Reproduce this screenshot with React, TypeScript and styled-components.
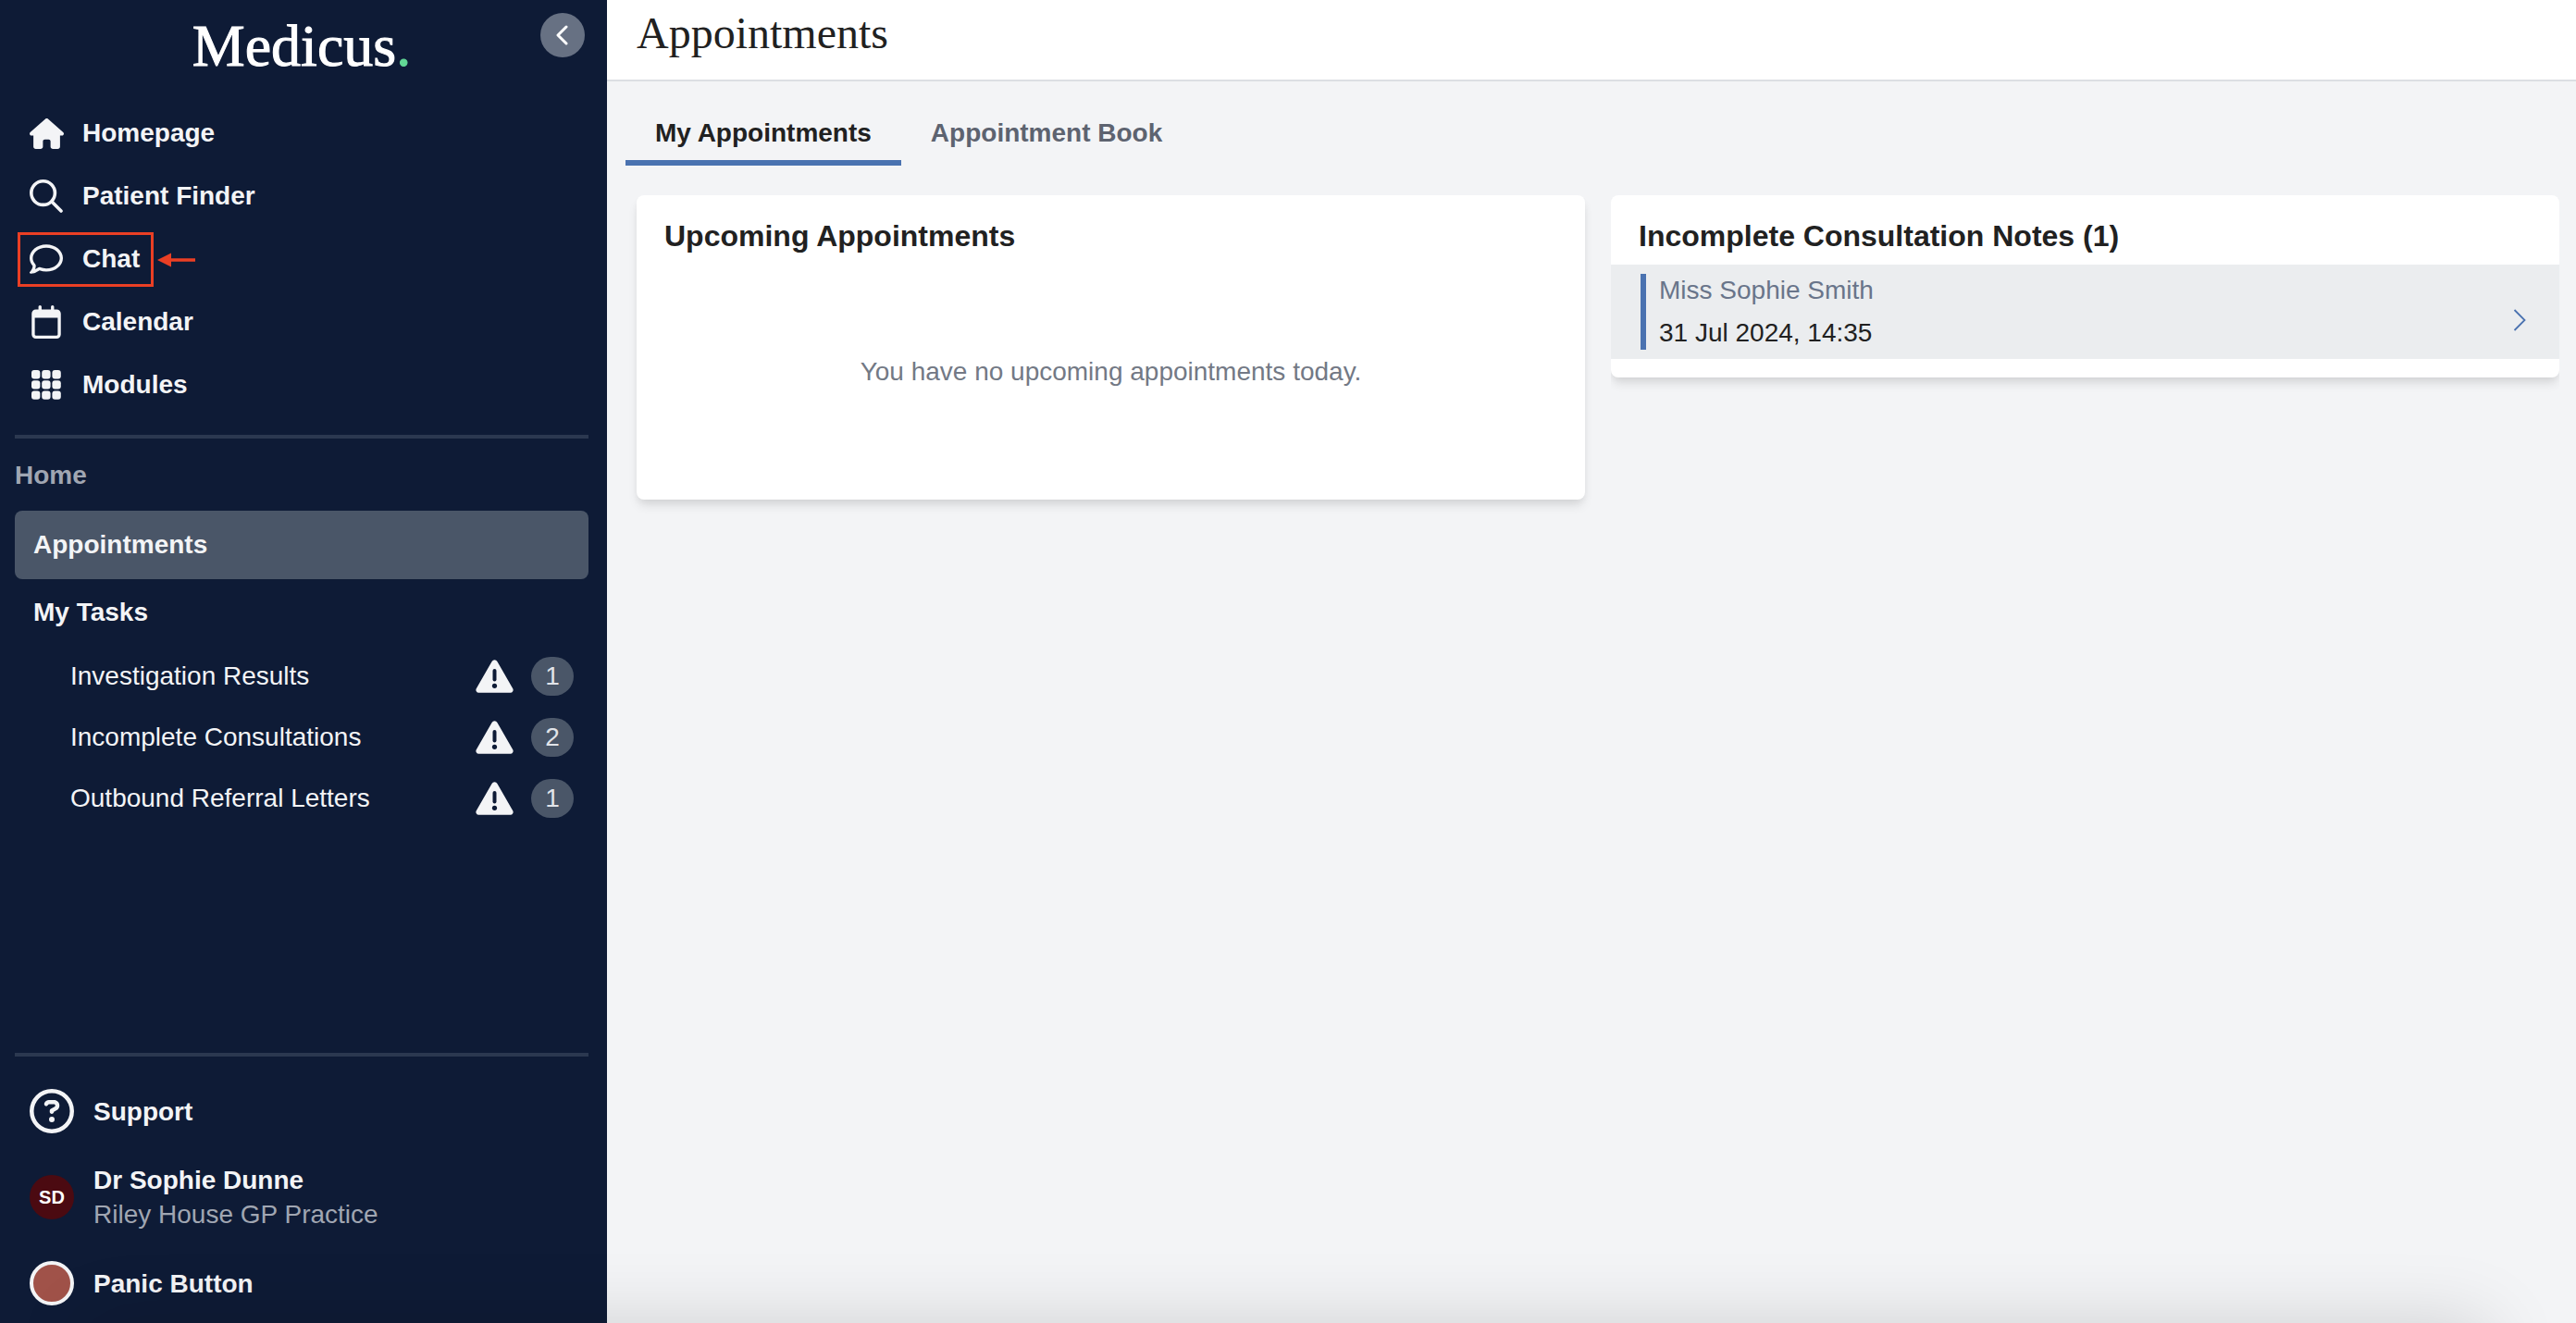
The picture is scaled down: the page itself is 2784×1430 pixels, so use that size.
import React from "react";
import styled, { createGlobalStyle } from "styled-components";
import {
  FaHouse,
  FaRegComment,
  FaRegCalendar,
  FaRegCircleQuestion,
} from "react-icons/fa6";

const colors = {
  navy: "#0e1b36",
  navyLine: "#2b3850",
  slate: "#4a5668",
  light: "#f3f4f6",
  muted: "#a0a6b2",
  ink: "#212121",
  blue: "#4a72b0",
  red: "#ea3f24",
};

const GlobalStyle = createGlobalStyle`
  *, *::before, *::after { box-sizing: border-box; }
  body {
    margin: 0;
    background: ${colors.light};
    color: ${colors.ink};
    font-family: "Liberation Sans", Arial, sans-serif;
    font-size: 28px;
    line-height: 36px;
  }
  a { color: inherit; text-decoration: none; }
  button { font: inherit; color: inherit; border: 0; background: none; padding: 0; cursor: pointer; }
  ul { list-style: none; margin: 0; padding: 0; }
  h1, h2, p { margin: 0; }
  svg { display: block; flex: none; }
`;

const Page = styled.div`
  display: flex;
  min-height: 100vh;
`;

/* Sidebar */

const Sidebar = styled.aside`
  display: flex;
  flex-direction: column;
  flex: none;
  width: 656px;
  background: ${colors.navy};
  color: ${colors.light};
`;

const Brand = styled.div`
  display: grid;
  grid-template-columns: 1fr auto 1fr;
  align-items: start;
  height: 110px;
  padding: 14px 24px 0 20px;
`;

const Logo = styled.a`
  grid-column: 2;
  padding-top: 4px;
  font-family: "Liberation Serif", "Times New Roman", serif;
  font-size: 64px;
  line-height: 64px;
  color: #ffffff;
  -webkit-text-stroke: 1px currentColor;
`;

const LogoDot = styled.span`
  color: #62d896;
`;

const CollapseButton = styled.button`
  display: flex;
  align-items: center;
  justify-content: center;
  justify-self: end;
  width: 48px;
  height: 48px;
  border-radius: 50%;
  background: #677183;
  color: #ffffff;
`;

const NavItem = styled.li`
  position: relative;
`;

const NavLink = styled.a`
  display: flex;
  align-items: center;
  gap: 19px;
  height: 68px;
  padding-left: 30px;
  font-weight: 700;
`;

const IconSlot = styled.span`
  display: flex;
  justify-content: center;
  width: 40px;
`;

const Highlight = styled.span`
  position: absolute;
  left: 19px;
  top: 5px;
  width: 147px;
  height: 59px;
  border: 3px solid ${colors.red};
  pointer-events: none;
`;

const Arrow = styled.svg`
  position: absolute;
  left: 170px;
  top: 27px;
`;

const Divider = styled.hr`
  width: auto;
  height: 4px;
  margin: 0 20px 0 16px;
  border: 0;
  background: ${colors.navyLine};
`;

const Section = styled.nav`
  padding: 20px 20px 0 16px;

  ${Divider} {
    margin: 0;
  }
`;

const SectionTitle = styled.h2`
  padding-top: 2px;
  font-size: 28px;
  line-height: 76px;
  color: ${colors.muted};
`;

const SectionLink = styled.a<{ $active?: boolean }>`
  display: flex;
  align-items: center;
  height: ${(p) => (p.$active ? 74 : 72)}px;
  padding: 0 20px;
  border-radius: 8px;
  font-weight: 700;
  background: ${(p) => (p.$active ? colors.slate : "transparent")};
`;

const TaskLink = styled.a`
  display: flex;
  align-items: center;
  gap: 19px;
  height: 66px;
  padding: 0 16px 0 60px;
`;

const TaskName = styled.span`
  flex: 1;
`;

const Count = styled.span`
  width: 46px;
  border-radius: 21px;
  background: ${colors.slate};
  color: #e1e4e9;
  line-height: 42px;
  text-align: center;
`;

const Footer = styled.div`
  margin-top: auto;
`;

const FooterList = styled.div`
  display: flex;
  flex-direction: column;
  align-items: flex-start;
  gap: 32px;
  padding: 35px 32px 19px;
`;

const FooterButton = styled.button`
  display: flex;
  align-items: center;
  gap: 21px;
  line-height: 37px;
  text-align: left;
`;

const Strong = styled.span`
  display: block;
  font-weight: 700;
`;

const Practice = styled.span`
  display: block;
  color: ${colors.muted};
`;

const Avatar = styled.span`
  width: 48px;
  border-radius: 50%;
  background: #4b0a11;
  color: #ffffff;
  font-size: 20px;
  font-weight: 700;
  line-height: 48px;
  text-align: center;
`;

const PanicDot = styled.span`
  width: 48px;
  height: 48px;
  border: 4px solid ${colors.light};
  border-radius: 50%;
  background: #a05249;
`;

/* Main area */

const Main = styled.main`
  flex: 1;
  min-width: 0;
`;

const Header = styled.header`
  height: 88px;
  padding: 8px 32px 0;
  border-bottom: 2px solid #dcdfe3;
  background: #ffffff;
`;

const Title = styled.h1`
  font-family: "Liberation Serif", "Times New Roman", serif;
  font-size: 48px;
  font-weight: 400;
  line-height: 56px;
`;

const Tabs = styled.div`
  display: flex;
  padding: 22px 20px 0;
`;

const Tab = styled.button<{ $active?: boolean }>`
  height: 69px;
  padding: 4px 32px 0;
  border-bottom: 6px solid ${(p) => (p.$active ? colors.blue : "transparent")};
  font-weight: 700;
  color: ${(p) => (p.$active ? colors.ink : "#5d6370")};
`;

const Cards = styled.div`
  display: grid;
  grid-template-columns: 1fr 1fr;
  align-items: start;
  gap: 28px;
  padding: 32px 18px 32px 32px;
`;

const Card = styled.section<{ $clipSides?: boolean }>`
  border-radius: 8px;
  background: #ffffff;
  box-shadow: 0 8px 12px -2px rgba(0, 0, 0, 0.1), 0 4px 8px -2px rgba(0, 0, 0, 0.06);
  clip-path: ${(p) => (p.$clipSides ? "inset(-4px 0 -24px 0)" : "none")};
`;

const CardTitle = styled.h2`
  padding: 24px 30px 11px;
  font-size: 32px;
  line-height: 40px;
`;

const Empty = styled.p`
  padding: 98px 30px 120px;
  color: #737985;
  text-align: center;
`;

const NoteList = styled.ul`
  padding-bottom: 20px;
`;

const NoteLink = styled.a`
  display: flex;
  align-items: center;
  justify-content: space-between;
  padding: 10px 36px 10px 32px;
  background: #ebedef;
`;

const NoteText = styled.div`
  padding-left: 14px;
  border-left: 6px solid ${colors.blue};
`;

const Patient = styled.span`
  display: block;
  padding-bottom: 10px;
  color: #69758a;
`;

const NoteDate = styled.time`
  display: block;
`;

const ChevronSlot = styled.span`
  padding-top: 18px;
`;

const BottomShade = styled.div`
  position: fixed;
  left: 95px;
  right: 95px;
  bottom: -200px;
  height: 200px;
  box-shadow: 0 0 80px rgba(0, 0, 0, 0.15);
  pointer-events: none;
`;

const SearchIcon = () => (
  <svg width="36" height="36" viewBox="0 0 36 36" fill="none" stroke="currentColor" strokeWidth="3.6" strokeLinecap="round">
    <circle cx="14.6" cy="14.6" r="12.8" />
    <path d="M24 24l10 10" />
  </svg>
);

const GridIcon = () => (
  <svg width="32" height="32" viewBox="0 0 32 32" fill="currentColor">
    {[0, 11.2, 22.4].map((y) =>
      [0, 11.2, 22.4].map((x) => (
        <rect key={`${x}-${y}`} x={x} y={y} width="9.4" height="9.4" rx="3" />
      ))
    )}
  </svg>
);

const WarningIcon = () => (
  <svg width="41" height="36" viewBox="0 0 41 36" aria-label="Warning">
    <path
      d="M17.6 1.9a3.4 3.4 0 0 1 5.8 0L40.2 31.2a3 3 0 0 1-2.6 4.5H3.4a3 3 0 0 1-2.6-4.5Z"
      fill="currentColor"
    />
    <path d="M20.5 12v9.6" stroke={colors.navy} strokeWidth="4" strokeLinecap="round" />
    <circle cx="20.5" cy="28.3" r="2.6" fill={colors.navy} />
  </svg>
);

const navItems = [
  { label: "Homepage", icon: <FaHouse size={37} /> },
  { label: "Patient Finder", icon: <SearchIcon /> },
  { label: "Chat", icon: <FaRegComment size={36} />, highlighted: true },
  { label: "Calendar", icon: <FaRegCalendar size={36} /> },
  { label: "Modules", icon: <GridIcon /> },
];

const tasks = [
  { label: "Investigation Results", count: 1 },
  { label: "Incomplete Consultations", count: 2 },
  { label: "Outbound Referral Letters", count: 1 },
];

export default function App() {
  return (
    <Page>
      <GlobalStyle />
      <Sidebar>
        <Brand>
          <Logo href="#">
            Medicus<LogoDot>.</LogoDot>
          </Logo>
          <CollapseButton aria-label="Collapse sidebar">
            <svg width="14" height="24" viewBox="0 0 14 24" fill="none" stroke="currentColor" strokeWidth="3" strokeLinecap="round" strokeLinejoin="round">
              <path d="M11 3L2 12l9 9" />
            </svg>
          </CollapseButton>
        </Brand>

        <nav>
          <ul>
            {navItems.map((item) => (
              <NavItem key={item.label}>
                <NavLink href="#">
                  <IconSlot>{item.icon}</IconSlot>
                  {item.label}
                </NavLink>
                {item.highlighted && (
                  <>
                    <Highlight />
                    <Arrow width="42" height="16" viewBox="0 0 42 16" fill={colors.red}>
                      <path d="M0 8L15 0.5V6.3H41V9.7H15V15.5Z" />
                    </Arrow>
                  </>
                )}
              </NavItem>
            ))}
          </ul>
        </nav>

        <Section>
          <Divider />
          <SectionTitle>Home</SectionTitle>
          <SectionLink href="#" $active>
            Appointments
          </SectionLink>
          <SectionLink href="#">My Tasks</SectionLink>
          <ul>
            {tasks.map((task) => (
              <li key={task.label}>
                <TaskLink href="#">
                  <TaskName>{task.label}</TaskName>
                  <WarningIcon />
                  <Count>{task.count}</Count>
                </TaskLink>
              </li>
            ))}
          </ul>
        </Section>

        <Footer>
          <Divider />
          <FooterList>
            <FooterButton>
              <FaRegCircleQuestion size={48} />
              <Strong>Support</Strong>
            </FooterButton>
            <FooterButton>
              <Avatar>SD</Avatar>
              <span>
                <Strong>Dr Sophie Dunne</Strong>
                <Practice>Riley House GP Practice</Practice>
              </span>
            </FooterButton>
            <FooterButton>
              <PanicDot />
              <Strong>Panic Button</Strong>
            </FooterButton>
          </FooterList>
        </Footer>
      </Sidebar>

      <Main>
        <Header>
          <Title>Appointments</Title>
        </Header>
        <Tabs role="tablist">
          <Tab role="tab" aria-selected="true" $active>
            My Appointments
          </Tab>
          <Tab role="tab" aria-selected="false">
            Appointment Book
          </Tab>
        </Tabs>
        <Cards>
          <Card>
            <CardTitle>Upcoming Appointments</CardTitle>
            <Empty>You have no upcoming appointments today.</Empty>
          </Card>
          <Card $clipSides>
            <CardTitle>Incomplete Consultation Notes (1)</CardTitle>
            <NoteList>
              <li>
                <NoteLink href="#">
                  <NoteText>
                    <Patient>Miss Sophie Smith</Patient>
                    <NoteDate dateTime="2024-07-31T14:35">31 Jul 2024, 14:35</NoteDate>
                  </NoteText>
                  <ChevronSlot>
                    <svg width="14" height="24" viewBox="0 0 14 24" fill="none" stroke={colors.blue} strokeWidth="1.8">
                      <path d="M1.5 1L12.5 12l-11 11" />
                    </svg>
                  </ChevronSlot>
                </NoteLink>
              </li>
            </NoteList>
          </Card>
        </Cards>
      </Main>
      <BottomShade />
    </Page>
  );
}
